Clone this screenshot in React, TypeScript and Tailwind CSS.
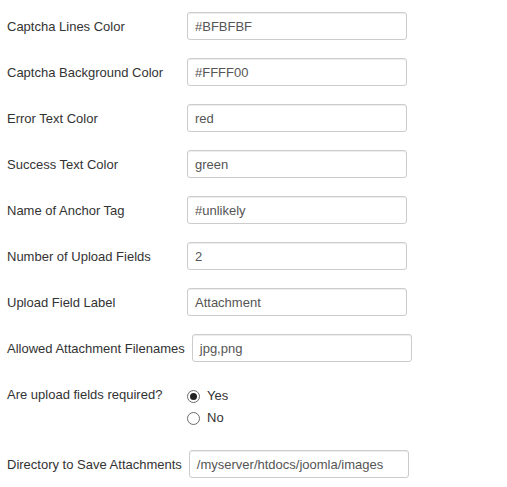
import React from "react";

const rows1: [string, string][] = [
  ["Captcha Lines Color", "#BFBFBF"],
  ["Captcha Background Color", "#FFFF00"],
  ["Error Text Color", "red"],
  ["Success Text Color", "green"],
  ["Name of Anchor Tag", "#unlikely"],
  ["Number of Upload Fields", "2"],
  ["Upload Field Label", "Attachment"],
  ["Allowed Attachment Filenames", "jpg,png"],
];

function Field({ label, value }: { label: string; value: string }) {
  return (
    <div className="flex items-center mb-[18px]">
      <label className="min-w-[180px] pr-[7px] pt-[2px] whitespace-nowrap">{label}</label>
      <div className="w-[220px] h-[28px] border border-[#cccccc] rounded-[3px] bg-white shadow-[inset_0_1px_1px_rgba(0,0,0,0.075)] flex items-center pl-[7px] pt-[2px] text-[#555555]">
        {value}
      </div>
    </div>
  );
}

function Radio({ checked, label }: { checked: boolean; label: string }) {
  return (
    <div className="flex items-center h-[22px]">
      <span className="w-[13px] h-[13px] rounded-full border border-[#6b6b6b] bg-white flex items-center justify-center">
        {checked && <span className="w-[7px] h-[7px] rounded-full bg-[#222]" />}
      </span>
      <span className="ml-[7px]">{label}</span>
    </div>
  );
}

export default function App() {
  return (
    <div className="bg-white w-[507px] h-[487px] pt-[12px] pl-[7px] text-[13px] text-[#333333] font-['Liberation_Sans',Arial,sans-serif]">
      {rows1.map(([l, v]) => (
        <Field key={l} label={l} value={v} />
      ))}
      <div className="flex mb-[21px]">
        <label className="min-w-[180px] pr-[7px] pt-[6px] leading-[18px]">Are upload fields required?</label>
        <div className="pt-[5px]">
          <Radio checked label="Yes" />
          <Radio checked={false} label="No" />
        </div>
      </div>
      <Field label="Directory to Save Attachments" value="/myserver/htdocs/joomla/images" />
    </div>
  );
}
